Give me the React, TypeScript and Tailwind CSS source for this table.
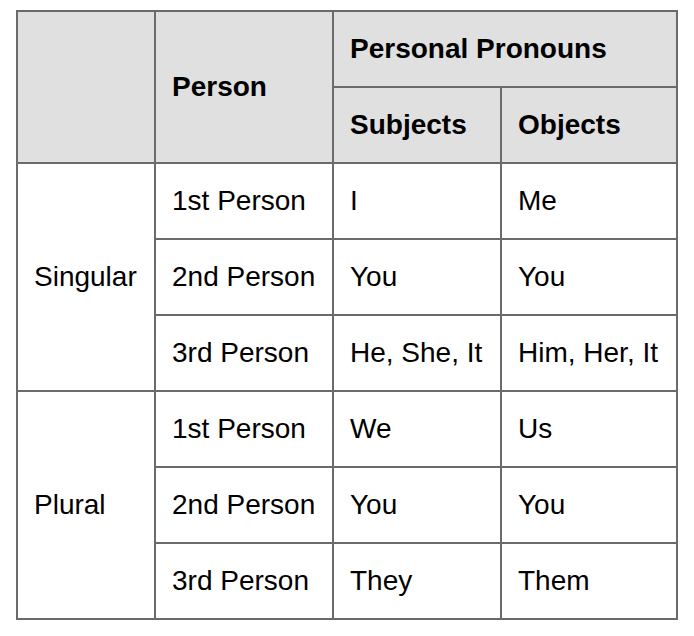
// Personal pronouns table

const rows = [
  { group: 'Singular', person: '1st Person', subject: 'I', object: 'Me' },
  { group: 'Singular', person: '2nd Person', subject: 'You', object: 'You' },
  { group: 'Singular', person: '3rd Person', subject: 'He, She, It', object: 'Him, Her, It' },
  { group: 'Plural', person: '1st Person', subject: 'We', object: 'Us' },
  { group: 'Plural', person: '2nd Person', subject: 'You', object: 'You' },
  { group: 'Plural', person: '3rd Person', subject: 'They', object: 'Them' },
]

const cell = 'border-2 border-[#6b6b6b] pl-4 pr-2 text-left align-middle'

export default function App() {
  return (
    <div
      className="min-h-screen bg-white pt-[10px] pl-[16px] text-[28px] text-black"
      style={{ fontFamily: '"Liberation Sans", Arial, sans-serif' }}
    >
      <table className="table-fixed border-collapse">
        <colgroup>
          <col className="w-[138px]" />
          <col className="w-[178px]" />
          <col className="w-[168px]" />
          <col className="w-[176px]" />
        </colgroup>
        <thead className="bg-[#e0e0e0] font-bold">
          <tr className="h-[76px]">
            <th rowSpan={2} className={cell} />
            <th rowSpan={2} className={cell}>Person</th>
            <th colSpan={2} className={cell}>Personal Pronouns</th>
          </tr>
          <tr className="h-[76px]">
            <th className={cell}>Subjects</th>
            <th className={cell}>Objects</th>
          </tr>
        </thead>
        <tbody className="font-normal">
          {rows.map((r, i) => (
            <tr key={i} className="h-[76px]">
              {i % 3 === 0 && (
                <td rowSpan={3} className={cell}>
                  {r.group}
                </td>
              )}
              <td className={cell}>{r.person}</td>
              <td className={cell}>{r.subject}</td>
              <td className={cell}>{r.object}</td>
            </tr>
          ))}
        </tbody>
      </table>
    </div>
  )
}
